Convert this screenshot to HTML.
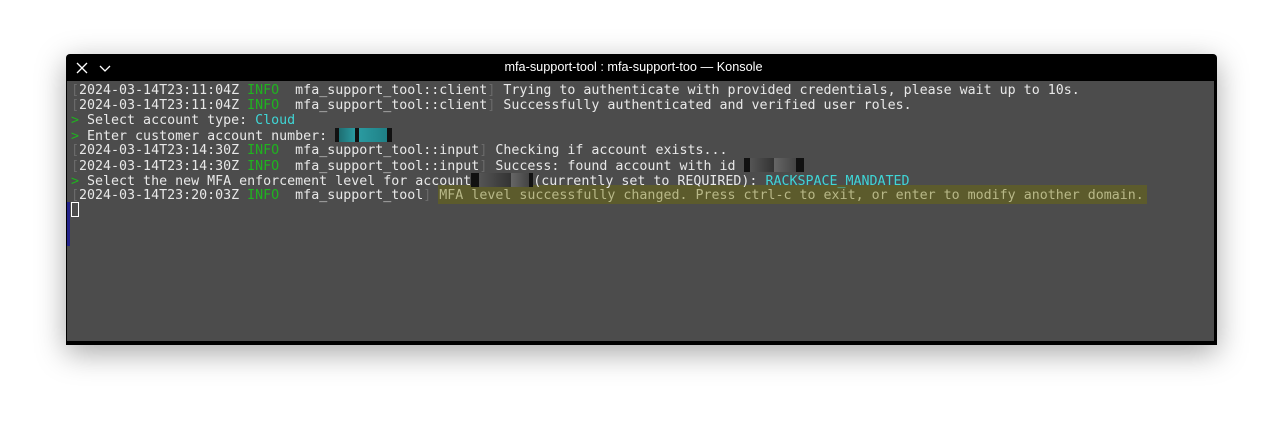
<!DOCTYPE html>
<html><head><meta charset="utf-8"><style>
body{margin:0;width:1284px;height:424px;background:#fff;position:relative;overflow:hidden;font-family:"DejaVu Sans Mono","Liberation Mono",monospace}
.win{position:absolute;left:66px;top:54px;width:1151px;height:291px;background:#000;border-radius:4px 4px 0 0;box-shadow:0 8px 30px rgba(0,0,0,.35)}
.title{position:absolute;left:0;top:0;width:1135px;height:27px;color:#fff;font-family:"Liberation Sans",sans-serif;font-size:12.7px;text-align:center;line-height:27px}
.term{position:absolute;left:1px;top:27px;width:1147px;height:260px;background:#4c4c4c}
.l{position:absolute;left:4px;font-size:13.3px;line-height:15px;height:15px;white-space:pre;color:#e8e8e8;letter-spacing:0}
.d{color:#6a6a6a}.g{color:#1fb31f}.c{color:#3fd6d6}.y{color:#b8b888}
.hl{position:absolute;left:371px;top:104px;width:709px;height:19px;background:#5c5b2c}
.red{display:inline-block;height:14px;vertical-align:-2px;background:#111}
</style></head><body>
<div class="win">
<div class="title">mfa-support-tool : mfa-support-too — Konsole</div>
<svg style="position:absolute;left:9px;top:7px" width="14" height="14"><path d="M2 2L12 12M12 2L2 12" stroke="#fff" stroke-width="1.3"/></svg>
<svg style="position:absolute;left:32px;top:7px" width="14" height="14"><path d="M2 5L7 10L12 5" stroke="#fff" stroke-width="1.3" fill="none"/></svg>
<div class="term">
<div class="hl"></div>
<div style="position:absolute;left:0;top:121px;width:3px;height:44px;background:#23238a"></div>
<div style="position:absolute;left:4px;top:121px;width:6px;height:13px;border:1px solid #fff"></div>
<div style="position:absolute;left:0;top:2px;width:100%;height:200px">
<div class="l" style="top:0"><span class="d">[</span>2024-03-14T23:11:04Z <span class="g">INFO </span> mfa_support_tool::client<span class="d">]</span> Trying to authenticate with provided credentials, please wait up to 10s.</div>
<div class="l" style="top:15px"><span class="d">[</span>2024-03-14T23:11:04Z <span class="g">INFO </span> mfa_support_tool::client<span class="d">]</span> Successfully authenticated and verified user roles.</div>
<div class="l" style="top:30px"><span class="g">&gt;</span> Select account type: <span class="c">Cloud</span></div>
<div class="l" style="top:45px"><span class="g">&gt;</span> Enter customer account number: <span class="red" style="width:57px;background:linear-gradient(90deg,#111 4px,#1e6e72 4px,#2a9aa0 20px,#111 20px,#111 24px,#2a9aa0 24px,#1f8086 52px,#111 52px)"></span></div>
<div class="l" style="top:60px"><span class="d">[</span>2024-03-14T23:14:30Z <span class="g">INFO </span> mfa_support_tool::input<span class="d">]</span> Checking if account exists...</div>
<div class="l" style="top:75px"><span class="d">[</span>2024-03-14T23:14:30Z <span class="g">INFO </span> mfa_support_tool::input<span class="d">]</span> Success: found account with id <span class="red" style="width:60px;background:linear-gradient(90deg,#111 6px,#555 6px,#333 30px,#666 30px,#444 52px,#111 52px)"></span></div>
<div class="l" style="top:90px"><span class="g">&gt;</span> Select the new MFA enforcement level for account<span class="red" style="width:62px;background:linear-gradient(90deg,#111 8px,#555 8px,#333 40px,#666 40px,#444 58px,#111 58px)"></span>(currently set to REQUIRED): <span class="c">RACKSPACE_MANDATED</span></div>
<div class="l" style="top:105px"><span class="d">[</span>2024-03-14T23:20:03Z <span class="g">INFO </span> mfa_support_tool<span class="d">]</span> <span class="y">MFA level successfully changed. Press ctrl-c to exit, or enter to modify another domain.</span></div>
</div>
</div>
</div>
</body></html>
